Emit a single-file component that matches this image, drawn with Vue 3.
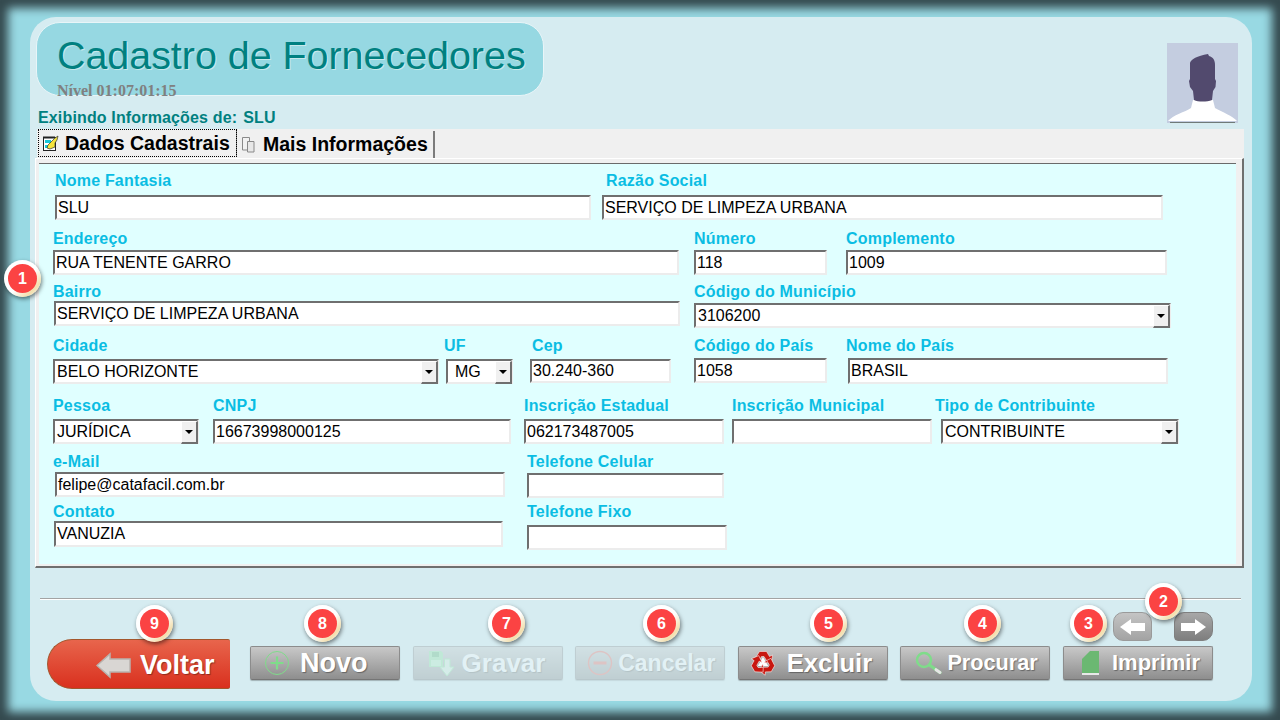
<template>
    <div class="screen">
        <div class="panel">
            <div class="top-row">
                <div class="top-left">
                    <div class="title-pill">
                        <h1 class="title">Cadastro de Fornecedores</h1>
                        <span class="level">Nível 01:07:01:15</span>
                    </div>
                    <p class="showing">Exibindo Informações de: <span class="showing-name">SLU</span></p>
                </div>
                <div class="avatar">
                    <svg width="71" height="80" viewBox="0 0 71 80">
                        <rect width="71" height="80" fill="#c4cde0" />
                        <path d="M1 78 C6 72 18 69 24 65 L26 57 L46 57 L48 65 C55 69 66 73 70 78 Z" fill="#fff" />
                        <path d="M23 20 C24 16 30 13 41 11 L42 13 C46 14 48 17 48 22 L48 36 L49 38 L48.5 44 L46 48 L45 57 C40 59 31 59 27 57 L26 48 L23 44 L22 38 L23 36 Z" fill="#524a6e" />
                        <rect x="3" y="79" width="65" height="1" fill="#6f7a78" />
                    </svg>
                </div>
            </div>

            <div class="tabs">
                <div class="tab tab-active">
                    <svg width="17" height="17" viewBox="0 0 17 17">
                        <rect x="1.5" y="2.5" width="12" height="13" fill="#fff" stroke="#222" />
                        <path d="M2 1v3M4 1v3M6 1v3M8 1v3M10 1v3M12 1v3" stroke="#222" />
                        <path d="M3 5h6v3H3zM3 10h4v3H3z" fill="#19c7d8" />
                        <path d="M6 10 L13 3 L16 1 L15 5 L13 8 L13 12 L8 14 L5 13 Z" fill="#f5e33b" stroke="#333" stroke-width="0.7" />
                    </svg>
                    <span>Dados Cadastrais</span>
                </div>
                <div class="tab">
                    <svg width="16" height="17" viewBox="0 0 16 17">
                        <path d="M2.5 1.5h7v12.5h-7z" fill="#f2f2f2" stroke="#8a8a8a" />
                        <path d="M7.5 5.5h6.5v10.5h-6.5z" fill="#e8e8e8" stroke="#8a8a8a" />
                    </svg>
                    <span>Mais Informações</span>
                </div>
            </div>

            <div class="tab-panel">
                <div class="form">
                    <div v-for="row in layoutRows" :key="row.top" class="form-row" :style="{ height: row.height + 'px' }">
                        <div
                            v-for="field in row.fields"
                            :key="field.label"
                            class="field"
                            :style="{ width: field.w + 'px', marginLeft: field.offset + 'px' }"
                        >
                            <label class="field-label" :style="{ marginLeft: field.lx - field.ix + 'px' }">{{ field.label }}</label>
                            <div class="control" :style="{ marginTop: field.gap + 'px', height: field.h + 'px' }">
                                <span class="control-text" :class="{ 'is-select': field.select, 'is-short': field.pad }">{{ field.value }}</span>
                                <span v-if="field.select" class="select-button"><i class="select-arrow"></i></span>
                            </div>
                        </div>
                    </div>
                </div>
            </div>

            <div class="divider"></div>

            <div class="actions">
                <button type="button" class="back-button">
                    <svg width="36" height="27" viewBox="0 0 36 27">
                        <path d="M1 13.5 L14 2 L14 7 L34 7 L34 20 L14 20 L14 25 Z" fill="#d9d6d3" stroke="#b9b3ae" stroke-width="1.5" />
                    </svg>
                    <span>Voltar</span>
                </button>

                <div class="action-buttons">
                    <button type="button" class="action-button label-novo">
                        <svg class="action-icon" width="26" height="26" viewBox="0 0 26 26">
                            <circle cx="13" cy="13" r="11.5" fill="none" stroke="#7fdc8a" stroke-width="1" />
                            <path d="M13 6.5v13M6.5 13h13" stroke="#7fdc8a" stroke-width="2.2" />
                        </svg>
                        <span>Novo</span>
                    </button>
                    <button type="button" class="action-button is-disabled label-gravar">
                        <svg class="action-icon" width="26" height="28" viewBox="0 0 26 28">
                            <path d="M0 2h12l2 2v14H0z" fill="#8fe09c" />
                            <rect x="3" y="3" width="7" height="5" fill="#5fb573" />
                            <rect x="2" y="11" width="10" height="6" fill="#b7ecc0" />
                            <path d="M15.500 10h5.500v8h4l-7 9-7-9h4.500z" fill="#d3ecd8" stroke="#8fe09c" />
                        </svg>
                        <span>Gravar</span>
                    </button>
                    <button type="button" class="action-button is-disabled label-cancelar">
                        <svg class="action-icon" width="26" height="26" viewBox="0 0 26 26">
                            <circle cx="13" cy="13" r="11.5" fill="none" stroke="#ef6a60" stroke-width="1.4" />
                            <path d="M6.5 13h13" stroke="#ef6a60" stroke-width="3" />
                        </svg>
                        <span>Cancelar</span>
                    </button>
                    <button type="button" class="action-button label-excluir">
                        <svg class="action-icon" width="26" height="26" viewBox="-13 -13 26 26">
                            <path d="M0 -6 L5.200 3 L-5.200 3 Z" fill="#fff" />
                            <g v-for="angle in [0, 120, 240]" :key="angle" :transform="`rotate(${angle})`">
                                <path d="M-8 -4.500 L-3.500 -11.500 L3.500 -11.500 L6.500 -6.500 L9.500 -8 L8.500 0 L1 -0.500 L3.500 -2.500 L1 -6.500 L-1.500 -6.500 L-4 -2 Z" fill="#c8170f" stroke="#fff" stroke-width="0.5" />
                            </g>
                        </svg>
                        <span>Excluir</span>
                    </button>
                    <button type="button" class="action-button label-procurar">
                        <svg class="action-icon" width="28" height="28" viewBox="0 0 28 28">
                            <circle cx="9" cy="11" r="7" fill="none" stroke="#7fdc8a" stroke-width="2.4" />
                            <path d="M14.500 16 L25 23.500" stroke="#7fdc8a" stroke-width="3.200" stroke-linecap="round" />
                            <path d="M21 20.700 L25 23.500" stroke="#e6e6e6" stroke-width="3" stroke-linecap="round" />
                        </svg>
                        <span>Procurar</span>
                    </button>
                    <div class="print-stack">
                        <div class="nav-buttons">
                            <button type="button" class="nav-button">
                                <svg width="27" height="18" viewBox="0 0 27 18">
                                    <path d="M1 9 L12 1 L12 5 L26 5 L26 13 L12 13 L12 17 Z" fill="#fff" />
                                </svg>
                            </button>
                            <button type="button" class="nav-button nav-dark">
                                <svg width="27" height="18" viewBox="0 0 27 18">
                                    <path d="M26 9 L15 1 L15 5 L1 5 L1 13 L15 13 L15 17 Z" fill="#fff" />
                                </svg>
                            </button>
                        </div>
                        <button type="button" class="action-button label-imprimir">
                            <svg class="action-icon" width="20" height="26" viewBox="0 0 20 26">
                                <path d="M1 9 L9 1 L18 1 L18 23 L1 23 Z" fill="#6bb872" />
                                <path d="M1 23 L18 23 L18 25 L1 25 Z" fill="#e8e8e8" />
                            </svg>
                            <span>Imprimir</span>
                        </button>
                    </div>
                </div>
            </div>
        </div>

        <span
            v-for="badge in badges"
            :key="badge.n"
            class="badge"
            :style="{ left: badge.x - 18 + 'px', top: badge.y - 18 + 'px' }"
        >{{ badge.n }}</span>
    </div>
</template>

<script setup>
import { computed } from 'vue';

const FORM_LEFT = 39;
const LABEL_H = 16;

// lx: label left, ix: control left, iy: control top, all in page pixels
const rows = [
    {
        top: 172,
        fields: [
            { label: 'Nome Fantasia', lx: 55, ix: 55, w: 536, iy: 195, h: 25, value: 'SLU' },
            { label: 'Razão Social', lx: 606, ix: 602, w: 561, iy: 195, h: 25, value: 'SERVIÇO DE LIMPEZA URBANA' },
        ],
    },
    {
        top: 230,
        fields: [
            { label: 'Endereço', lx: 53, ix: 53, w: 626, iy: 250, h: 25, value: 'RUA TENENTE GARRO' },
            { label: 'Número', lx: 694, ix: 694, w: 133, iy: 250, h: 25, value: '118' },
            { label: 'Complemento', lx: 846, ix: 846, w: 321, iy: 250, h: 25, value: '1009' },
        ],
    },
    {
        top: 283,
        fields: [
            { label: 'Bairro', lx: 53, ix: 54, w: 626, iy: 301, h: 25, value: 'SERVIÇO DE LIMPEZA URBANA' },
            { label: 'Código do Município', lx: 694, ix: 694, w: 477, iy: 303, h: 25, value: '3106200', select: true },
        ],
    },
    {
        top: 337,
        fields: [
            { label: 'Cidade', lx: 53, ix: 53, w: 386, iy: 359, h: 25, value: 'BELO HORIZONTE', select: true },
            { label: 'UF', lx: 444, ix: 446, w: 67, iy: 359, h: 25, value: 'MG', select: true, pad: true },
            { label: 'Cep', lx: 532, ix: 530, w: 141, iy: 359, h: 24, value: '30.240-360' },
            { label: 'Código do País', lx: 694, ix: 694, w: 133, iy: 358, h: 25, value: '1058' },
            { label: 'Nome do País', lx: 846, ix: 848, w: 320, iy: 358, h: 26, value: 'BRASIL' },
        ],
    },
    {
        top: 397,
        fields: [
            { label: 'Pessoa', lx: 53, ix: 53, w: 146, iy: 419, h: 25, value: 'JURÍDICA', select: true },
            { label: 'CNPJ', lx: 213, ix: 213, w: 298, iy: 419, h: 25, value: '16673998000125' },
            { label: 'Inscrição Estadual', lx: 524, ix: 524, w: 200, iy: 419, h: 25, value: '062173487005' },
            { label: 'Inscrição Municipal', lx: 732, ix: 732, w: 200, iy: 419, h: 25, value: '' },
            { label: 'Tipo de Contribuinte', lx: 935, ix: 941, w: 238, iy: 419, h: 25, value: 'CONTRIBUINTE', select: true },
        ],
    },
    {
        top: 453,
        fields: [
            { label: 'e-Mail', lx: 53, ix: 55, w: 450, iy: 472, h: 25, value: 'felipe@catafacil.com.br' },
            { label: 'Telefone Celular', lx: 527, ix: 527, w: 197, iy: 473, h: 25, value: '' },
        ],
    },
    {
        top: 503,
        fields: [
            { label: 'Contato', lx: 53, ix: 54, w: 449, iy: 521, h: 26, value: 'VANUZIA' },
            { label: 'Telefone Fixo', lx: 527, ix: 527, w: 200, iy: 525, h: 25, value: '' },
        ],
    },
];

const layoutRows = computed(() =>
    rows.map((row, i) => {
        const next = rows[i + 1] ? rows[i + 1].top : row.top + 60;
        let right = FORM_LEFT;
        const fields = row.fields.map((field) => {
            const offset = field.ix - right;
            right = field.ix + field.w;
            return { ...field, offset, gap: field.iy - row.top - LABEL_H };
        });
        return { top: row.top, height: next - row.top, fields };
    })
);

const badges = [
    { n: 1, x: 22, y: 278 },
    { n: 2, x: 1163, y: 601 },
    { n: 3, x: 1088, y: 623 },
    { n: 4, x: 982, y: 623 },
    { n: 5, x: 828, y: 623 },
    { n: 6, x: 661, y: 623 },
    { n: 7, x: 506, y: 623 },
    { n: 8, x: 322, y: 623 },
    { n: 9, x: 154, y: 623 },
];
</script>

<style scoped>
.screen {
    position: relative;
    width: 1280px;
    height: 720px;
    box-sizing: border-box;
    padding: 17px 28px 19px 30px;
    overflow: hidden;
    background: #98d9e3;
    box-shadow: inset 0 0 10px 8px #34494e;
    font-family: "Liberation Sans", Arial, sans-serif;
}

.panel {
    height: 684px;
    border-radius: 26px;
    background: #d6ecf1;
    display: flex;
    flex-direction: column;
}

.top-row {
    height: 112px;
    display: flex;
    justify-content: space-between;
}

.top-left {
    padding: 5px 0 0 6px;
}

.title-pill {
    width: 508px;
    height: 74px;
    box-sizing: border-box;
    border: 1px solid #e8f5f8;
    border-radius: 24px;
    background: #96d8e2;
    position: relative;
}

.title {
    margin: 9px 0 0 20px;
    font-size: 39.4px;
    font-weight: 400;
    line-height: 46px;
    color: #008080;
    text-shadow: 1px 1px 0 #c8e8ea;
    white-space: nowrap;
}

.level {
    position: absolute;
    left: 20px;
    top: 60px;
    font-family: "Liberation Serif", serif;
    font-size: 16px;
    font-weight: 700;
    line-height: 16px;
    color: #808080;
    white-space: nowrap;
}

.showing {
    margin: 13px 0 0 2px;
    font-size: 16px;
    font-weight: 700;
    line-height: 17px;
    letter-spacing: 0.15px;
    color: #008080;
    white-space: nowrap;
}

.showing-name {
    margin-left: 1.5px;
}

.avatar {
    margin: 26px 14px 0 0;
    width: 71px;
    height: 80px;
}

.tabs {
    margin-left: 7px;
    width: 1207px;
    height: 29px;
    background: #f0f0f0;
    display: flex;
    font-size: 19.5px;
    font-weight: 700;
    color: #000;
}

.tab {
    width: 198px;
    height: 27px;
    margin-top: 2px;
    box-sizing: border-box;
    padding-left: 3px;
    display: flex;
    align-items: center;
    gap: 7px;
    border-right: 2px solid #7c7c7c;
    white-space: nowrap;
    line-height: 27px;
}

.tab-active {
    width: 199px;
    height: 28px;
    margin-top: 0;
    margin-left: 1px;
    padding-left: 4px;
    gap: 6px;
    outline: 1px dotted #000;
    outline-offset: -1px;
    border-right: 1px solid #7c7c7c;
}

.tab-panel {
    margin-left: 5px;
    width: 1209px;
    height: 410px;
    box-sizing: border-box;
    padding: 4px 6px 2px 3px;
    background: #f0f0f0;
    border-top: 1px solid #fff;
    border-left: 1px solid #fff;
    border-right: 2px solid #6f6f6f;
    border-bottom: 2px solid #6f6f6f;
}

.form {
    height: 100%;
    box-sizing: border-box;
    padding-top: 8px;
    background: #e0ffff;
    border-top: 1px solid #6a6a6a;
}

.form-row {
    display: flex;
    align-items: flex-start;
}

.field {
    flex: none;
}

.field-label {
    display: block;
    height: 16px;
    font-size: 16px;
    font-weight: 700;
    line-height: 18px;
    letter-spacing: 0.2px;
    color: #0abde3;
    white-space: nowrap;
}

.control {
    box-sizing: border-box;
    display: flex;
    align-items: center;
    background: #fff;
    border-top: 2px solid #6f6f6f;
    border-left: 2px solid #6f6f6f;
    border-right: 2px solid #ececec;
    border-bottom: 2px solid #ececec;
    font-size: 16px;
    color: #000;
    white-space: nowrap;
}

.control-text {
    flex: 1;
    padding: 0 0 0 1px;
}

.is-select {
    padding-left: 2px;
}

.is-short {
    padding-left: 7px;
}

.select-button {
    flex: none;
    width: 17px;
    height: 23px;
    margin: -1px -1px -2px 0;
    box-sizing: border-box;
    display: flex;
    align-items: center;
    justify-content: center;
    background: #f0f0f0;
    border-top: 1px solid #fff;
    border-left: 1px solid #fff;
    border-right: 2px solid #6f6f6f;
    border-bottom: 2px solid #6f6f6f;
}

.select-arrow {
    width: 0;
    height: 0;
    border-left: 4px solid transparent;
    border-right: 4px solid transparent;
    border-top: 4px solid #000;
}

.divider {
    margin: 30px 11px 0 10px;
    height: 1px;
    background: #a3a3a3;
    border-bottom: 1px solid #fff;
}

.actions {
    margin-top: 12px;
    padding-left: 17px;
    display: flex;
    align-items: flex-start;
}

button {
    font-family: inherit;
    cursor: pointer;
    padding: 0;
}

.back-button {
    margin-top: 27px;
    width: 183px;
    height: 50px;
    box-sizing: border-box;
    padding: 2px 0 0 48px;
    display: flex;
    align-items: center;
    gap: 8px;
    border: 1px solid #a3562c;
    border-right: 0;
    border-radius: 25px 2px 2px 25px;
    background: linear-gradient(#e8654c, #d9301e);
    color: #fff;
    font-size: 27px;
    font-weight: 700;
    text-shadow: 1px 1px 1px rgba(0, 0, 0, 0.35);
}

.action-buttons {
    margin-left: 20px;
    display: flex;
    align-items: flex-start;
    gap: 12.6px;
}

.action-button {
    margin-top: 34px;
    width: 150px;
    height: 34px;
    box-sizing: border-box;
    display: flex;
    align-items: center;
    border: 1px solid #8c8c8c;
    border-bottom-color: #757575;
    border-radius: 2px;
    background: linear-gradient(#c8c8c8, #8e8e8e);
    box-shadow: 0 1px 1px rgba(0, 0, 0, 0.25);
    color: #fff;
    font-weight: 700;
    text-shadow: 1px 1px 1px rgba(0, 0, 0, 0.35);
    white-space: nowrap;
}

.is-disabled {
    opacity: 0.3;
}

.action-icon {
    flex: none;
}

.label-novo {
    padding-left: 13px;
    gap: 10px;
    font-size: 27px;
}

.label-gravar {
    padding-left: 15px;
    gap: 7px;
    font-size: 26px;
}

.label-cancelar {
    padding-left: 11px;
    gap: 5px;
    font-size: 23px;
}

.label-excluir {
    padding-left: 11px;
    gap: 11px;
    font-size: 25.6px;
}

.label-procurar {
    padding-left: 14px;
    gap: 4px;
    font-size: 21.7px;
}

.label-imprimir {
    margin-top: 5px;
    padding-left: 17px;
    gap: 11px;
    font-size: 22px;
}

.print-stack {
    width: 150px;
    display: flex;
    flex-direction: column;
}

.nav-buttons {
    margin-left: 50px;
    display: flex;
    justify-content: space-between;
}

.nav-button {
    width: 39px;
    height: 29px;
    box-sizing: border-box;
    display: flex;
    align-items: center;
    justify-content: center;
    border: 1px solid #9a9a9a;
    border-radius: 10px 10px 4px 10px;
    background: linear-gradient(#c4c4c4, #a3a3a3);
}

.nav-dark {
    background: linear-gradient(#a8a8a8, #7e7e7e);
    border-color: #808080;
    border-radius: 10px 10px 10px 4px;
}

.badge {
    position: absolute;
    width: 37px;
    height: 37px;
    box-sizing: border-box;
    display: flex;
    align-items: center;
    justify-content: center;
    border: 4.5px solid transparent;
    border-radius: 50%;
    background:
        linear-gradient(#fb4343, #fb4343) padding-box,
        linear-gradient(135deg, #fff 55%, #f3dfae 80%, #fff) border-box;
    box-shadow: 1px 2px 4px rgba(0, 0, 0, 0.5);
    color: #fff;
    font-size: 16px;
    font-weight: 700;
}
</style>
